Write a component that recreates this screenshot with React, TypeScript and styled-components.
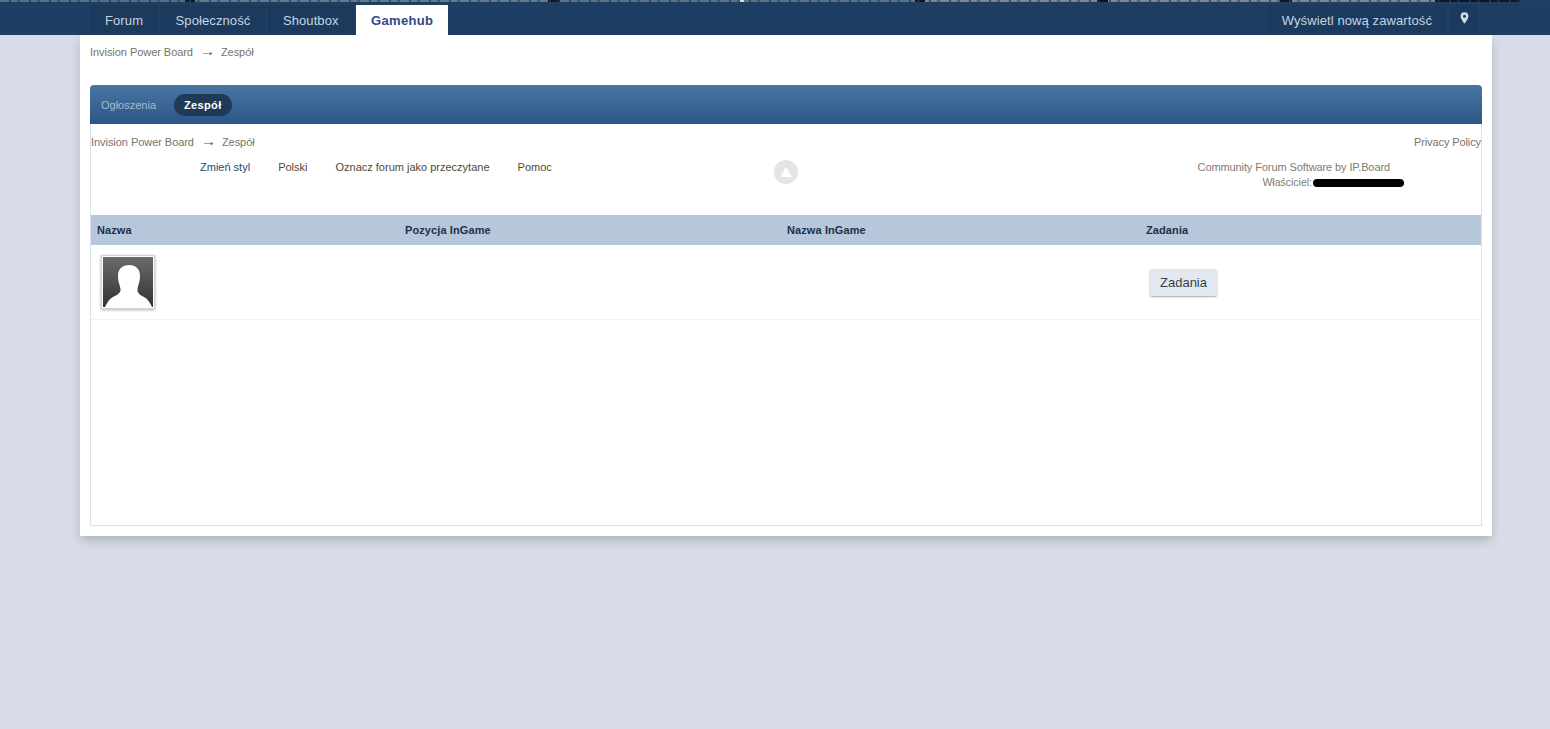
import React from "react";
import styled, { createGlobalStyle } from "styled-components";

const Global = createGlobalStyle`
  html, body { margin: 0; padding: 0; background: #d8dce8; }
  body { font-family: "Liberation Sans", Arial, sans-serif; font-size: 11px; color: #5a5a5a; }
  a { text-decoration: none; color: inherit; }
`;

const Page = styled.div`
  min-height: 729px;
`;
const TopStrip = styled.div`
  height: 2px;
  background:
    repeating-linear-gradient(90deg, rgba(31, 62, 99, 0) 0 9px, rgba(31, 62, 99, 0.75) 9px 11px, rgba(31, 62, 99, 0) 11px 17px, rgba(31, 62, 99, 0.5) 17px 20px),
    linear-gradient(90deg,
      #5a6e84 0 185px, #10161d 185px 195px, #66788c 195px 548px, #10161d 548px 560px,
      #5f7286 560px 740px, #d9dde2 740px 744px, #5f7286 744px 915px, #10161d 915px 925px,
      #7d8896 925px 1097px, #0d1116 1097px 1108px, #7d8896 1108px 1280px, #10161d 1280px 1292px,
      #7d8896 1292px 1435px, #10161d 1435px 1520px, #24405f 1520px);
`;
const Header = styled.header`
  height: 33px;
  background: #1f3e63;
  display: flex;
  justify-content: space-between;
  padding: 0 72px 0 90px;
`;
const Tabs = styled.nav`
  display: flex;
  align-items: flex-end;
  gap: 2.5px;
`;
const Tab = styled.a<{ $active?: boolean }>`
  height: 30px;
  display: flex;
  align-items: center;
  padding: 0 15px;
  font-size: 13px;
  letter-spacing: ${(p) => (p.$active ? "0.3px" : "0.1px")};
  color: ${(p) => (p.$active ? "#2f4b85" : "#c5d5e2")};
  background: ${(p) => (p.$active ? "#fff" : "#1c3a5e")};
  font-weight: ${(p) => (p.$active ? "bold" : "normal")};
`;
const RightNav = styled.div`
  display: flex;
  align-items: flex-end;
  gap: 4px;
`;
const RightLink = styled.a`
  height: 30px;
  box-sizing: border-box;
  display: flex;
  align-items: center;
  padding: 0 14px 0 15px;
  font-size: 13px;
  letter-spacing: 0.1px;
  color: #c5d5e2;
  background: #1c3a5e;
`;
const PinButton = styled(RightLink)`
  padding: 0 9px 4px 10px;
`;
const Panel = styled.main`
  margin: 0 58px 0 80px;
  height: 501px;
  background: #fff;
  box-shadow: 0 5px 10px -1px rgba(0, 0, 0, 0.2);
  padding: 0 10px;
  box-sizing: border-box;
`;
const Crumbs = styled.div`
  display: flex;
  align-items: center;
  height: 14px;
  font-size: 11px;
  letter-spacing: -0.05px;
  color: #77726c;
`;
const TopCrumbs = styled(Crumbs)`
  padding-top: 10px;
`;
const Arrow = styled.span`
  margin: -2px 6px 0 7px;
  font-size: 15px;
  line-height: 14px;
  color: #555;
`;
const SubBar = styled.div`
  margin-top: 26px;
  height: 39px;
  border-radius: 4px 4px 0 0;
  background: linear-gradient(#4a76a3, #2b5586);
  display: flex;
  align-items: center;
  padding: 0 0 0 11px;
`;
const SubItem = styled.a`
  font-size: 11px;
  color: #a9b9ca;
`;
const SubActive = styled.a`
  margin-left: 18px;
  height: 22px;
  padding: 0 10px;
  display: flex;
  align-items: center;
  border-radius: 11px;
  background: #1e3a55;
  color: #fff;
  font-weight: bold;
  font-size: 11px;
  letter-spacing: 0.35px;
`;
const Frame = styled.div`
  height: 402px;
  border: 1px solid #dbe2ec;
  border-top: 0;
  box-sizing: border-box;
`;
const CrumbRow = styled.div`
  display: flex;
  justify-content: space-between;
  align-items: center;
  padding-top: 11px;
  height: 14px;
  box-sizing: content-box;
`;
const Privacy = styled.a`
  font-size: 11px;
  letter-spacing: -0.1px;
  color: #77726c;
`;
const FooterRow = styled.div`
  position: relative;
  display: flex;
  justify-content: space-between;
  height: 66px;
  padding: 11px 91px 0 109px;
  box-sizing: border-box;
`;
const FooterLinks = styled.div`
  display: flex;
  gap: 28px;
  font-size: 11px;
  height: 14px;
  align-items: center;
`;
const FooterLink = styled.a<{ $blue?: boolean }>`
  color: ${(p) => (p.$blue ? "#1d4a72" : "#4f4a38")};
`;
const TopButton = styled.a`
  position: absolute;
  left: 683px;
  top: 11px;
  width: 24px;
  height: 24px;
  border-radius: 50%;
  background: #e4e4e4;
  display: flex;
  align-items: center;
  justify-content: center;
`;
const Copyright = styled.div`
  font-size: 11px;
  letter-spacing: -0.1px;
  line-height: 15px;
  color: #7f7a70;
  text-align: right;
`;
const Owner = styled.div`
  display: flex;
  align-items: center;
  justify-content: flex-end;
  margin-right: -14px;
  font-size: 10.5px;
  letter-spacing: 0;
`;
const Redacted = styled.span`
  display: inline-block;
  width: 91px;
  height: 8px;
  margin-left: 1px;
  border-radius: 4px;
  background: #000;
`;
const Grid = styled.div`
  display: grid;
  grid-template-columns: 308px 382px 359px 1fr;
`;
const HeadCell = styled.div`
  height: 30px;
  background: #b6c7dc;
  display: flex;
  align-items: center;
  padding-left: 6px;
  font-size: 11px;
  letter-spacing: 0.1px;
  font-weight: bold;
  color: #242f48;
`;
const RowCell = styled.div`
  height: 75px;
  border-bottom: 1px solid #f0f2f5;
  box-sizing: border-box;
  padding: 10px 0 0 10px;
`;
const ActionCell = styled(RowCell)`
  padding: 24px 0 0 10px;
`;
const Avatar = styled.div`
  width: 54px;
  height: 54px;
  border: 2px solid #fff;
  outline: 1px solid #d4d4d4;
  outline-offset: -1px;
  box-shadow: 0 1px 3px rgba(0, 0, 0, 0.3);
  box-sizing: border-box;
  overflow: hidden;
  line-height: 0;
`;
const Button = styled.button`
  width: 67px;
  height: 27px;
  padding: 0;
  border: 1px solid #e2e8ef;
  border-radius: 2px;
  background: #e3e9f1;
  box-shadow: 0 1px 2px rgba(0, 0, 0, 0.35);
  font-family: inherit;
  font-size: 13px;
  color: #3a3f46;
`;

export default function App() {
  return (
    <Page>
      <Global />
      <TopStrip />
      <Header>
        <Tabs>
          <Tab>Forum</Tab>
          <Tab>Społeczność</Tab>
          <Tab>Shoutbox</Tab>
          <Tab $active>Gamehub</Tab>
        </Tabs>
        <RightNav>
          <RightLink>Wyświetl nową zawartość</RightLink>
          <PinButton>
            <svg width="9" height="12" viewBox="0 0 11 14">
              <path
                fillRule="evenodd"
                d="M5.5 0A4.8 4.8 0 0 0 .7 4.8C.7 8 5.5 14 5.5 14s4.8-6 4.8-9.2A4.8 4.8 0 0 0 5.5 0zm0 3a1.9 1.9 0 1 1 0 3.8 1.9 1.9 0 0 1 0-3.8z"
                fill="#cfdde8"
              />
            </svg>
          </PinButton>
        </RightNav>
      </Header>
      <Panel>
        <TopCrumbs>
          Invision Power Board<Arrow>→</Arrow>Zespół
        </TopCrumbs>
        <SubBar>
          <SubItem>Ogłoszenia</SubItem>
          <SubActive>Zespół</SubActive>
        </SubBar>
        <Frame>
          <CrumbRow>
            <Crumbs>
              Invision Power Board<Arrow>→</Arrow>Zespół
            </Crumbs>
            <Privacy>Privacy Policy</Privacy>
          </CrumbRow>
          <FooterRow>
            <FooterLinks>
              <FooterLink $blue>Zmień styl</FooterLink>
              <FooterLink>Polski</FooterLink>
              <FooterLink>Oznacz forum jako przeczytane</FooterLink>
              <FooterLink>Pomoc</FooterLink>
            </FooterLinks>
            <TopButton>
              <svg width="12" height="10" viewBox="0 0 12 10">
                <path d="M6 0l6 10H0z" fill="#fff" />
              </svg>
            </TopButton>
            <Copyright>
              Community Forum Software by IP.Board
              <Owner>
                Właściciel:<Redacted />
              </Owner>
            </Copyright>
          </FooterRow>
          <Grid>
            <HeadCell>Nazwa</HeadCell>
            <HeadCell>Pozycja InGame</HeadCell>
            <HeadCell>Nazwa InGame</HeadCell>
            <HeadCell>Zadania</HeadCell>
            <RowCell>
              <Avatar>
                <svg width="50" height="50" viewBox="0 0 50 50">
                  <defs>
                    <linearGradient id="av" x1="0" y1="0" x2="0" y2="1">
                      <stop offset="0" stopColor="#6a6a6a" />
                      <stop offset="1" stopColor="#333" />
                    </linearGradient>
                  </defs>
                  <rect width="50" height="50" fill="url(#av)" />
                  <path
                    d="M26 8C19 8 15 12 15 19C15 25 17 28 17.5 32C18 36 14 38 10 40C6 42 4 46 2 50H49C47 46 45 42 41 40C37 38 34 36 34.5 32C35 28 37 25 37 19C37 12 33 8 26 8Z"
                    fill="#fff"
                  />
                </svg>
              </Avatar>
            </RowCell>
            <RowCell />
            <RowCell />
            <ActionCell>
              <Button>Zadania</Button>
            </ActionCell>
          </Grid>
        </Frame>
      </Panel>
    </Page>
  );
}
